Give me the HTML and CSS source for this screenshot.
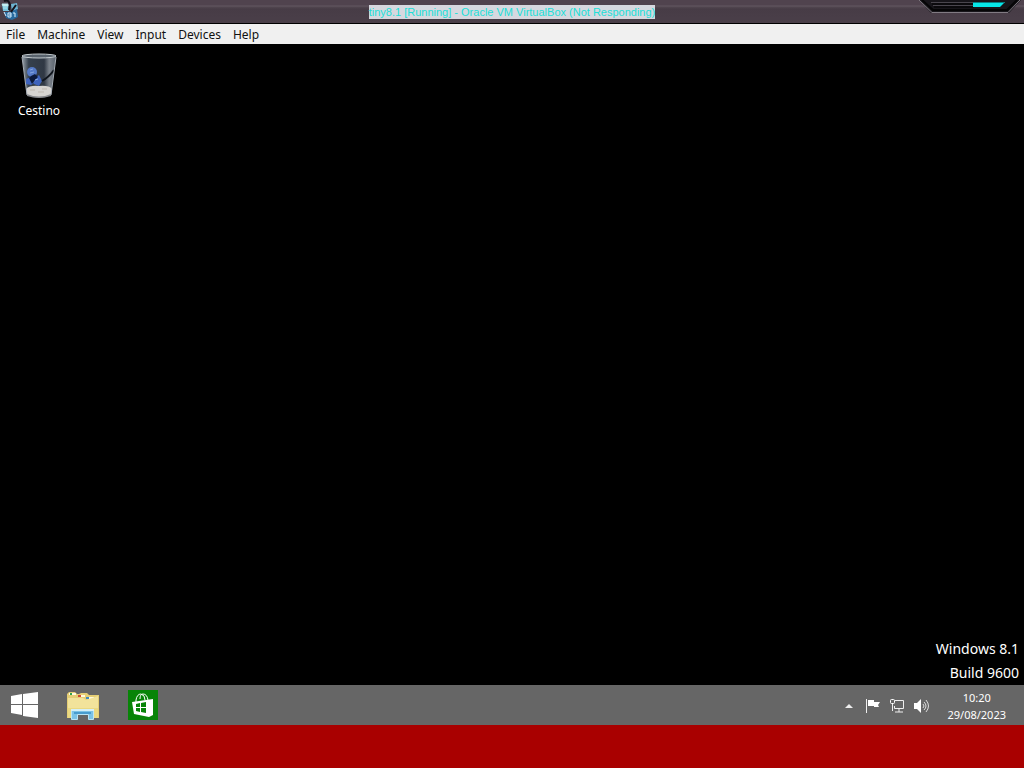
FILE: index.html
```
<!DOCTYPE html>
<html lang="en">
<head>
<meta charset="utf-8">
<title>tiny8.1 [Running] - Oracle VM VirtualBox</title>
<link rel="stylesheet" href="styles.css">
</head>
<body>
<header class="titlebar">
  <svg class="app-icon" width="20" height="22" viewBox="0 0 20 22" aria-hidden="true">
    <path d="M2 4 8 4 9 11 3 11Z" fill="#77c4dd"/>
    <path d="M11 4 17 3 18 9 12 12Z" fill="#6db4d2"/>
    <path d="M4 12 9 12 17 9 18 17 12 20 6 18Z" fill="#286a9e"/>
    <path d="M2 4h6v2H3zM3 8h4" fill="#d4f5f6" stroke="#b6e7ed"/>
    <path d="M4 1q5-2 6 4l-1 5M16 5l-5 7" fill="none" stroke="#15131a" stroke-width="2"/>
    <path d="M8 13h3v4H8zM13 13h2v4M9 15h2M4 12l2 4" fill="none" stroke="#d9f0ff"/>
  </svg>
  <h1 class="title">tiny8.1 [Running] - Oracle VM VirtualBox (Not Responding)</h1>
  <svg class="frame-ornament" width="108" height="15" viewBox="0 0 108 15" aria-hidden="true">
    <path d="M3 0H105L93 13H15Z" fill="#17151a"/>
    <path d="M3 0 16 12.5H92L104 0" fill="none" stroke="#817b83"/>
    <path d="M6 0 17 10H91L101 0" fill="none" stroke="#050506" stroke-width="2"/>
    <path d="M15 2.5H58M17 5.5H58" stroke="#4a464e"/>
    <path d="M16 4H58M18 7H58" stroke="#000"/>
    <path d="M57 2H89L84 7H57Z" fill="#07e6e8"/>
    <path d="M57 2H89L88 3H57Z" fill="#087f85"/>
  </svg>
</header>
<nav class="menubar" aria-label="Virtual machine">
  <button class="menu">File</button>
  <button class="menu">Machine</button>
  <button class="menu">View</button>
  <button class="menu">Input</button>
  <button class="menu">Devices</button>
  <button class="menu">Help</button>
</nav>
<main class="desktop">
  <button class="shortcut">
    <svg width="38" height="46" viewBox="0 0 38 46" aria-hidden="true">
      <defs>
        <linearGradient id="glass"><stop stop-color="#9ba4ac"/><stop offset=".2" stop-color="#35404c"/><stop offset=".65" stop-color="#303844"/><stop offset=".8" stop-color="#7b828b"/><stop offset="1" stop-color="#59616b"/></linearGradient>
      </defs>
      <path d="M2 3 36 3 31 42Q20 47 7 42Z" fill="url(#glass)"/>
      <path d="M6 36Q10 32 19 33 29 32 32 36L31 42Q20 47 7 42Z" fill="#d6d4d1"/>
      <path d="M7 41q12 5 24 0v2q-12 4-24 0" fill="#85878b"/>
      <circle cx="12" cy="19" r="5" fill="#5479c6"/>
      <path d="M6 26 11 24 14 30 11 32 6 31ZM14 26 19 22 22 28 19 33 14 31Z" fill="#3e63bd"/>
      <path d="M11 23 15 21 18 24 14 28 12 31 9 25Z" fill="#0c1a3c"/>
      <path d="M10 17l3-1m-3 4 4-1m1 8 3-1" stroke="#84a5e0"/>
      <path d="M22 28Q29 24 34 17" fill="none" stroke="#10151d" stroke-width="2"/>
      <path d="M10 37h5m3 2h6m-2-3h5" stroke="#bdb7af"/>
      <ellipse cx="19" cy="3" rx="17" ry="2" fill="#59636d" stroke="#c2c9cd"/>
      <path d="M2 4 7 42M36 4 31 42" stroke="#a6adb5"/>
    </svg>
    <span>Cestino</span>
  </button>
  <p class="watermark">Windows 8.1<br>Build 9600</p>
</main>
<footer class="taskbar">
  <div class="apps">
    <button class="app" aria-label="Start">
      <svg width="28" height="26" viewBox="0 0 28 26"><path d="M1 4 12 2V12H1ZM13 2 28 0V12H13ZM1 13H12V23L1 21ZM13 13H28V26L13 24Z" fill="#fff"/></svg>
    </button>
    <button class="app" aria-label="File Explorer">
      <svg width="34" height="30" viewBox="0 0 34 30">
        <path d="M1 4 3 2H9L11 4H13L15 3H21L23 5H33V28H1Z" fill="#e5ce75"/>
        <path d="M3 3h7v2H3zM12 5h7v2h-7zM20 7h8v2h-8z" fill="#fff9df"/>
        <path d="M4 3h2v2H4z" fill="#30a24c"/><path d="M12 5h3v2h-3z" fill="#d34b32"/><path d="M20 7h3v2h-3z" fill="#438cbd"/>
        <path d="M2 8H17L20 10 32 6V28H2Z" fill="#f2e39b"/>
        <path d="M2 18H32V28H2Z" fill="#ead982"/>
        <path d="M11 24h12v6H11z" fill="#666"/>
        <path d="M5.5 19.5H27.5V29.5H22.5V24.5H11.5V29.5H5.5Z" fill="#7bc3e7" stroke="#b9e4f5"/>
        <path d="M5 19h23v2H5z" fill="#d5f0f8"/><path d="M8 22h17v2H8z" fill="#489cce"/>
      </svg>
    </button>
    <button class="app" aria-label="Store">
      <svg width="30" height="30" viewBox="0 0 30 30">
        <path d="M0 0h30v30H0z" fill="#078407"/>
        <path d="M8 13V10q1-6 5-6 4 1 4 6M12 9q0-5 3-5 4 0 5 6" fill="none" stroke="#fff"/>
        <path d="M4 12 25 9V25L21 27 6 24Z" fill="#fff"/>
        <path d="m8 14 4-1v4H8zm5-1 5-1v5h-5zM8 18h4v4l-4-1zm5 0h5v5l-5-1z" fill="#078407"/>
      </svg>
    </button>
  </div>
  <div class="tray">
    <button class="tray-button" aria-label="Show hidden icons"><svg width="16" height="16" viewBox="0 0 16 16"><path d="M4 10 8 6 12 10Z" fill="#eee"/></svg></button>
    <button class="tray-button" aria-label="Notifications"><svg width="16" height="16" viewBox="0 0 16 16"><path d="M1.5 1V15" stroke="#eee"/><path d="M3 2H9V4H15L13 7 14 9H9V8H3Z" fill="#fff"/></svg></button>
    <button class="tray-button" aria-label="Network"><svg width="16" height="16" viewBox="0 0 16 16"><path d="M6 2.5H14.5V10.5H5.5V8M10 11V14M6 14H14M3.5 6V13" fill="none" stroke="#eee"/><rect x="1.5" y="1.5" width="4" height="4" rx="1" fill="#666" stroke="#fff"/></svg></button>
    <button class="tray-button" aria-label="Volume"><svg width="16" height="16" viewBox="0 0 16 16"><path d="M1 5H4L8 1V15L4 11H1Z" fill="#fff"/><path d="M10 6q2 2 0 4M11 4q4 4 0 8M13 2q5 6 0 12" fill="none" stroke="#ddd"/></svg></button>
    <button class="clock"><time datetime="2023-08-29T10:20">10:20<br>29/08/2023</time></button>
  </div>
</footer>
<div class="backdrop"></div>
</body>
</html>
```
FILE: styles.css
```
* { box-sizing: border-box; }
body {
  margin: 0;
  min-height: 100vh;
  display: flex;
  flex-direction: column;
  background: #000;
  font-family: "Noto Sans", sans-serif;
}
button {
  border: 0;
  padding: 0;
  background: none;
  color: inherit;
  font: inherit;
}
svg { display: block; }
.titlebar {
  display: grid;
  grid-template-columns: 1fr auto 1fr;
  align-items: start;
  height: 24px;
  border-bottom: 1px solid #000;
  background: linear-gradient(#50434e 0 5px, #625761 6px, #51464f 7px, #473c46 9px, #4a3f49);
}
.title {
  margin: 5px 0 0;
  background: #d6d8df;
  color: #20dfd8;
  font: 11px/14px "Liberation Sans", sans-serif;
  white-space: nowrap;
}
.frame-ornament { justify-self: end; }
.menubar {
  display: flex;
  gap: 12px;
  height: 20px;
  padding: 1px 6px 0;
  background: #f0f0f0;
  color: #111;
  font-size: 12px;
  line-height: 20px;
}
.desktop {
  flex: 1;
  display: flex;
  justify-content: space-between;
  padding: 9px 5px 0 2px;
  color: #fff;
}
.shortcut {
  display: flex;
  flex-direction: column;
  align-items: center;
  align-self: flex-start;
  gap: 3px;
  width: 74px;
  font-size: 12px;
  line-height: 18px;
}
.watermark {
  align-self: flex-end;
  margin: 0;
  font-size: 14px;
  line-height: 24px;
  text-align: right;
}
.taskbar {
  display: flex;
  justify-content: space-between;
  height: 40px;
  background: #666;
  color: #fff;
}
.apps, .tray { display: flex; align-items: center; }
.apps { padding-left: 10px; gap: 28px; }
.app { display: flex; }
.tray { gap: 8px; padding: 1px 18px 0 0; }
.clock {
  margin-left: 10px;
  font-size: 11px;
  line-height: 17px;
  text-align: center;
}
.backdrop { height: 43px; background: #a90000; }
```
